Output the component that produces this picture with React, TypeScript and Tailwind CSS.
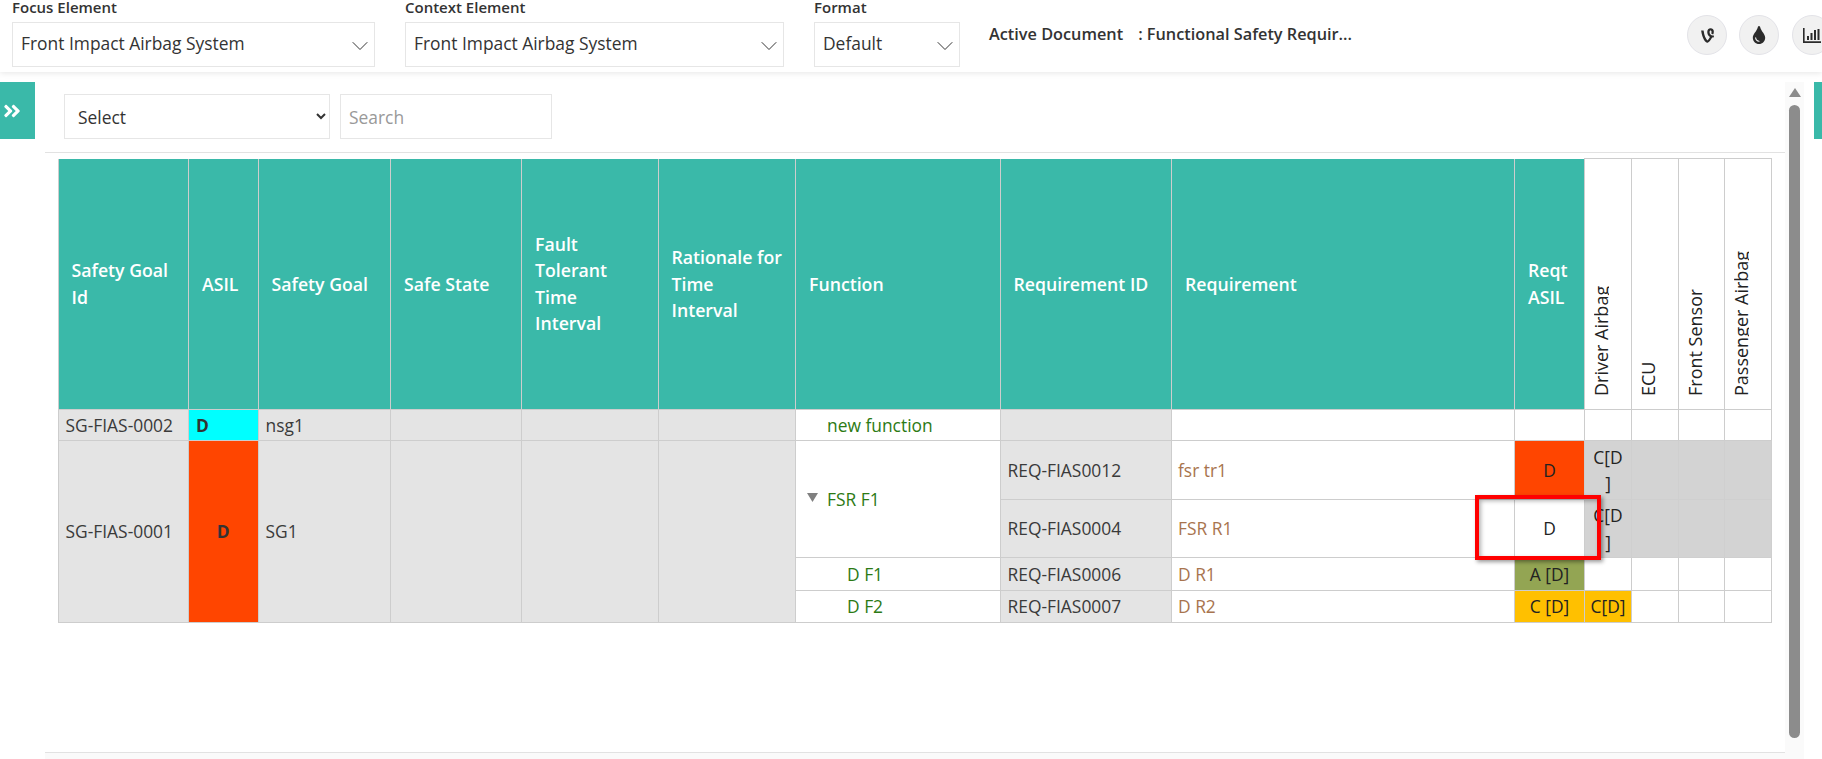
import { ChevronDown } from "lucide-react";
import { FaAngleDoubleRight, FaTint, FaVine } from "react-icons/fa";

const COLUMN_WIDTHS = [130.5, 69.5, 132.5, 131, 136.5, 137.5, 204.5, 171.5, 343, 70, 47, 46.5, 46.5, 46.5];

const HEADERS: string[][] = [
  ["Safety Goal", "Id"],
  ["ASIL"],
  ["Safety Goal"],
  ["Safe State"],
  ["Fault", "Tolerant", "Time", "Interval"],
  ["Rationale for", "Time", "Interval"],
  ["Function"],
  ["Requirement ID"],
  ["Requirement"],
  ["Reqt", "ASIL"],
];

const ALLOCATIONS = ["Driver Airbag", "ECU", "Front Sensor", "Passenger Airbag"];

const cell = "border border-[#cdcdcd] p-0 align-middle";
const grey = `${cell} bg-[#e4e4e4] px-[7px] text-[#3a3a3a]`;
const fn = `${cell} bg-white text-[#2c7a14]`;
const req = `${cell} bg-white px-[6px] text-[#a8744e]`;
const alloc = "border border-[#cfcfcf] bg-[#d3d3d3] p-0 text-center align-middle text-[#222]";
const center = `${cell} px-[4px] text-center text-[#222]`;

function TopSelect({ label, value, className }: { label: string; value: string; className: string }) {
  return (
    <div className={`shrink-0 ${className}`}>
      <div className="h-[22px] text-[15px] leading-[14px] font-semibold text-[#333]">{label}</div>
      <div className="flex h-[45px] items-center justify-between border border-[#e6e6e6] pl-[8px] text-[17.4px] text-[#333]">
        <span className="pb-[2px]">{value}</span>
        <ChevronDown size={28} strokeWidth={0.85} className="translate-y-[1px] text-[#333]" />
      </div>
    </div>
  );
}

function RoundButton({ children, className = "" }: { children: React.ReactNode; className?: string }) {
  return (
    <button
      type="button"
      className={`flex size-10 shrink-0 items-center justify-center rounded-full border border-[#e3e3e8] bg-[#f1f1f1] text-[#2b2b2b] ${className}`}
    >
      {children}
    </button>
  );
}

function Header() {
  return (
    <header className="relative z-10 flex h-[72px] items-start overflow-hidden bg-white pl-3 shadow-[0_1px_6px_rgba(0,0,0,0.1)]">
      <TopSelect label="Focus Element" value="Front Impact Airbag System" className="w-[363px]" />
      <TopSelect label="Context Element" value="Front Impact Airbag System" className="ml-[30px] w-[379px]" />
      <TopSelect label="Format" value="Default" className="ml-[30px] w-[146px]" />
      <div className="mt-[24px] ml-[29px] flex h-5 w-[363px] shrink-0 items-center text-[16.3px] font-semibold whitespace-nowrap text-[#333]">
        <span className="w-[150px]">Active Document</span>
        <span>: Functional Safety Requir...</span>
      </div>
      <div className="mt-[15px] ml-[335px] flex gap-3">
        <RoundButton>
          <FaVine size={17} />
        </RoundButton>
        <RoundButton>
          <FaTint size={18} />
        </RoundButton>
        <RoundButton className="ml-[1px]">
          <svg width="18" height="15" viewBox="0 0 18 15" fill="currentColor">
            <path d="M0 0h1.6v13.2H18V15H0z" />
            <rect x="4" y="8" width="2" height="4" />
            <rect x="7.5" y="5" width="2" height="7" />
            <rect x="11" y="2" width="2" height="10" />
            <rect x="14.5" y="1" width="2" height="11" />
          </svg>
        </RoundButton>
      </div>
    </header>
  );
}

function WrappedAllocation() {
  return (
    <td className={alloc}>
      C[D
      <br />]
    </td>
  );
}

function RequirementsTable() {
  return (
    <table className="ml-[12.5px] table-fixed border-collapse text-[17.4px] leading-[26.5px]">
      <colgroup>
        {COLUMN_WIDTHS.map((width, i) => (
          <col key={i} style={{ width }} />
        ))}
      </colgroup>
      <thead>
        <tr className="h-[251px]">
          {HEADERS.map((lines, i) => (
            <th key={i} className="border border-[#cdcdcd] border-t-0 border-b-0 bg-[#3ab9a9] px-[13px] text-left align-middle text-[17.7px] font-semibold text-white">
              {lines.map((line) => (
                <div key={line} className="whitespace-nowrap">
                  {line}
                </div>
              ))}
            </th>
          ))}
          {ALLOCATIONS.map((name) => (
            <th key={name} className="border border-[#cdcdcd] bg-white pr-0 pb-[13px] pl-[9px] text-left align-bottom text-[18px] font-normal text-[#222]">
              <div className="w-[15px] rotate-180 overflow-hidden leading-[15px] whitespace-nowrap [writing-mode:vertical-rl]">
                {name}
              </div>
            </th>
          ))}
        </tr>
      </thead>
      <tbody>
        <tr className="h-[31px]">
          <td className={grey}>SG-FIAS-0002</td>
          <td className={`${cell} bg-[#00ffff] px-[7px] font-bold text-[#333]`}>D</td>
          <td className={grey}>nsg1</td>
          <td className={grey} />
          <td className={grey} />
          <td className={grey} />
          <td className={`${fn} pl-[31px]`}>new function</td>
          <td className={grey} />
          <td className={req} />
          <td className={cell} />
          <td className={cell} />
          <td className={cell} />
          <td className={cell} />
          <td className={cell} />
        </tr>
        <tr className="h-[59px]">
          <td rowSpan={4} className={grey}>SG-FIAS-0001</td>
          <td rowSpan={4} className={`${cell} bg-[#ff4500] text-center font-bold text-[#333]`}>D</td>
          <td rowSpan={4} className={grey}>SG1</td>
          <td rowSpan={4} className={grey} />
          <td rowSpan={4} className={grey} />
          <td rowSpan={4} className={grey} />
          <td rowSpan={2} className={`${fn} pl-[11px]`}>
            <div className="flex items-center">
              <svg width="11" height="9" viewBox="0 0 11 9" className="mr-[9px] -translate-y-[2px] fill-[#808080]">
                <path d="M0 0h11L5.5 9z" />
              </svg>
              FSR F1
            </div>
          </td>
          <td className={grey}>REQ-FIAS0012</td>
          <td className={req}>fsr tr1</td>
          <td className={`${center} bg-[#ff4500]`}>D</td>
          <WrappedAllocation />
          <td className={alloc} />
          <td className={alloc} />
          <td className={alloc} />
        </tr>
        <tr className="h-[58px]">
          <td className={grey}>REQ-FIAS0004</td>
          <td className={req}>FSR R1</td>
          <td className={`${center} bg-white`}>D</td>
          <WrappedAllocation />
          <td className={alloc} />
          <td className={alloc} />
          <td className={alloc} />
        </tr>
        <tr className="h-[33px]">
          <td className={`${fn} pl-[51px]`}>D F1</td>
          <td className={grey}>REQ-FIAS0006</td>
          <td className={req}>D R1</td>
          <td className={`${center} bg-[#93a553]`}>A [D]</td>
          <td className={cell} />
          <td className={cell} />
          <td className={cell} />
          <td className={cell} />
        </tr>
        <tr className="h-[32px]">
          <td className={`${fn} pl-[51px]`}>D F2</td>
          <td className={grey}>REQ-FIAS0007</td>
          <td className={req}>D R2</td>
          <td className={`${center} bg-[#ffc000]`}>C [D]</td>
          <td className={`${cell} bg-[#ffc000] text-center text-[#222]`}>C[D]</td>
          <td className={cell} />
          <td className={cell} />
          <td className={cell} />
        </tr>
      </tbody>
    </table>
  );
}

export default function App() {
  return (
    <div className="relative h-[759px] w-[1822px] overflow-hidden bg-white font-['Open_Sans',sans-serif]">
      <Header />
      <div className="flex h-[687px]">
        <button type="button" className="mt-[10px] flex h-[57px] w-[35px] shrink-0 items-start justify-start bg-[#3ab9a9] pt-[19px] pl-[2px] text-white">
          <FaAngleDoubleRight size={20} />
        </button>

        <main className="ml-[10px] flex w-[1740px] shrink-0 flex-col">
          <div className="flex h-[81px] shrink-0 gap-[10px] border-b border-[#e2e2e2] pt-[22px] pl-[19px]">
            <select className="h-[45px] w-[266px] border border-[#e6e6e6] bg-white px-[9px] text-[17.4px] text-[#333]">
              <option>Select</option>
            </select>
            <input
              placeholder="Search"
              className="h-[45px] w-[212px] border border-[#e6e6e6] bg-white px-[8px] text-[17.4px] outline-none placeholder:text-[#999]"
            />
          </div>
          <div className="flex-1 pt-[5px]">
            <RequirementsTable />
          </div>
          <div className="h-[7px] shrink-0 border-t border-[#e2e2e2] bg-[#fafafa]" />
        </main>

        <div className="mt-[10px] flex w-[19px] shrink-0 flex-col items-center bg-[#fafafa] pt-[6px]">
          <div className="h-0 w-0 border-x-[6px] border-b-[9px] border-x-transparent border-b-[#8c8c8c]" />
          <div className="mt-[8px] h-[633px] w-[11px] rounded-full bg-[#8c8c8c]" />
        </div>

        <div className="mt-[10px] ml-[10px] h-[57px] w-[8px] shrink-0 bg-[#3ab9a9]" />
      </div>

      {/* callout drawn over the Reqt ASIL cell */}
      <div className="absolute top-[495px] left-[1475px] h-[65px] w-[126px] border-[4px] border-[#ff0000] shadow-[2px_2px_4px_rgba(0,0,0,0.4),inset_2px_2px_4px_rgba(0,0,0,0.3)]" />
    </div>
  );
}
